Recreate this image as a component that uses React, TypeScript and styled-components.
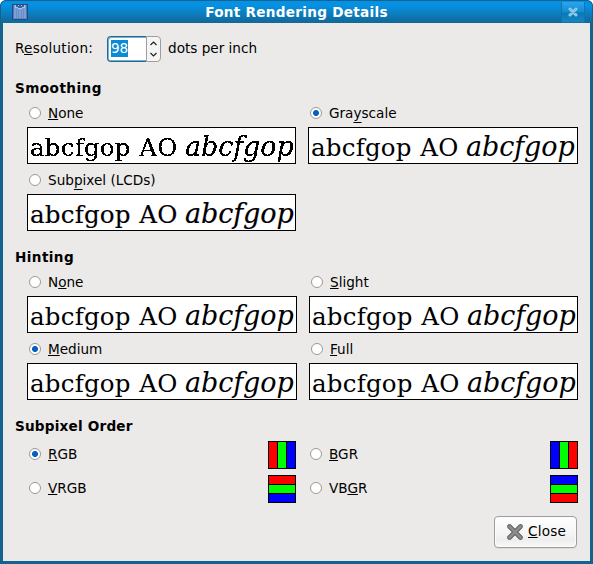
import React, { useState } from "react";
import styled, { createGlobalStyle, css } from "styled-components";

const GlobalStyle = createGlobalStyle`
  * { box-sizing: border-box; }
  html, body { margin: 0; padding: 0; background: #fff; }
  body { overflow: hidden; font: 13.6px/16px "DejaVu Sans", sans-serif; color: #000; }
`;

const Window = styled.div`
  width: 593px;
  height: 564px;
  display: flex;
  flex-direction: column;
  padding: 0 3px 3px;
  background: #12638d;
  border-radius: 6px 6px 0 0;
  overflow: hidden;
`;

const TitleBar = styled.header`
  flex: none;
  display: flex;
  align-items: center;
  height: 23px;
  margin: 0 -3px;
  padding: 0 7px 0 11px;
  border-top: 1px solid #17608a;
  border-left: 1px solid #12638d;
  border-right: 1px solid #12638d;
  border-radius: 6px 6px 0 0;
  background: linear-gradient(#0492e6, #0591e3 20%, #136795);
`;

const Title = styled.h1`
  flex: 1;
  margin: 0;
  padding-left: 4px;
  text-align: center;
  font-size: 13.6px;
  line-height: 22px;
  letter-spacing: 0.28px;
  color: #fff;
`;

const TitleClose = styled.button`
  display: flex;
  justify-content: center;
  width: 24px;
  height: 21px;
  padding: 5px 0 0;
  border: solid #0f75ae;
  border-width: 0 1px 1px;
  background: linear-gradient(#29a5ef, #148ad0 50%, #0878b7 55%, #1b84bd);
`;

const Content = styled.main`
  flex: 1;
  display: flex;
  flex-direction: column;
  padding: 12px 12px 0;
  background: #ebeae8;
`;

const ResolutionRow = styled.div`
  display: flex;
  align-items: center;
  height: 27px;
`;

const ResolutionLabel = styled.label`
  width: 92px;
  padding-bottom: 2px;
  letter-spacing: 0.22px;
`;

const Unit = styled.span`
  padding-bottom: 2px;
`;

const Spinner = styled.div`
  align-self: flex-end;
  display: flex;
  width: 54px;
  height: 26px;
  margin: 0 7px 0 0;
`;

const Entry = styled.div`
  width: 39px;
  padding: 3px 0 0 3px;
  border: 1px solid #1c6c98;
  border-right: 0;
  border-radius: 4px 0 0 4px;
  box-shadow: inset 1px 1px 0 #79adc9, inset 0 -1px 0 #79adc9;
  background: #fff;
`;

const Selection = styled.span`
  display: block;
  width: 17px;
  height: 17px;
  line-height: 16px;
  letter-spacing: -0.1px;
  background: #0b8ad7;
  color: #fff;
`;

const Arrows = styled.div`
  width: 15px;
  border: 1px solid #a29d9d;
  border-radius: 0 4px 4px 0;
  background: #f6f5f5;
  display: flex;
`;

const Group = styled.section`
  margin-top: 18px;
`;

const Heading = styled.h2<{ $tracking: number }>`
  margin: 0;
  height: 16px;
  font-size: 13.6px;
  line-height: 16px;
  letter-spacing: ${(p) => p.$tracking}px;
`;

const Grid = styled.div<{ $left: number; $right: number }>`
  display: grid;
  grid-template-columns: ${(p) => p.$left}px ${(p) => p.$right}px;
  justify-content: space-between;
  row-gap: 8px;
  margin: 9px 0 0 12px;
`;

const SwatchGrid = styled(Grid)`
  row-gap: 6px;
  margin-top: 7px;
`;

const Choice = styled.div``;

const SwatchChoice = styled.div`
  display: flex;
  justify-content: space-between;
  align-items: center;
  height: 28px;
`;

const Option = styled.label`
  display: flex;
  align-items: center;
  height: 16px;
  margin-bottom: 6px;
  padding-left: 2px;
  white-space: nowrap;

  ${SwatchChoice} & {
    margin: 0 0 2px;
  }
`;

const Radio = styled.input`
  appearance: none;
  flex: none;
  width: 12px;
  height: 12px;
  margin: 0 7px 0 0;
  border: 1px solid #9d9898;
  border-radius: 50%;
  background: #fff;
  outline: none;
  &:checked {
    background: radial-gradient(circle, #0560c4 2.6px, #fff 3.4px);
  }
`;

const Mnemonic = styled.span<{ $offset: number }>`
  text-decoration: underline;
  text-decoration-thickness: 1px;
  text-decoration-skip-ink: none;
  text-underline-offset: ${(p) => p.$offset}px;
`;

type Rendering = "mono" | "gray" | "lcd";

const Sample = styled.div<{ $mode: Rendering }>`
  height: 37px;
  padding-left: 2px;
  border: 1px solid #000;
  background: #fff;
  font: 24.5px/37px "DejaVu Serif", serif;
  white-space: pre;
  overflow: hidden;
  ${(p) =>
    p.$mode === "lcd" &&
    css`
      text-shadow: -0.4px 0 rgba(255, 130, 0, 0.25), 0.4px 0 rgba(0, 70, 255, 0.3);
    `}
`;

const SampleText = styled.div<{ $mode: Rendering }>`
  display: flex;
  align-items: baseline;
  height: 35px;
  filter: ${(p) => (p.$mode === "mono" ? "url(#mono)" : "none")};
`;

const Roman = styled.span`
  width: 155px;
  letter-spacing: 0.22px;
  word-spacing: 0.6px;
`;

const Italic = styled.em`
  font-size: 27px;
  letter-spacing: -0.1px;
`;

const Stripes = styled.div<{ $vertical: boolean }>`
  display: flex;
  flex-direction: ${(p) => (p.$vertical ? "column" : "row")};
  gap: 1px;
  width: 28px;
  height: 28px;
  padding: 1px;
  background: #000;
`;

const Stripe = styled.span<{ $color: string }>`
  flex: 1;
  background: ${(p) => p.$color};
`;

const Footer = styled.footer`
  display: flex;
  justify-content: flex-end;
  margin-top: 13px;
`;

const CloseButton = styled.button`
  display: flex;
  align-items: center;
  width: 83px;
  height: 32px;
  margin-right: 1px;
  padding: 0 0 0 11px;
  border: 1px solid #a29d9d;
  border-radius: 4px;
  background: linear-gradient(#fff, #f6f5f5 55%, #efeded 75%, #f8f8f8);
  box-shadow: inset 0 0 0 1px #fbfbfb, 0 1px 0 #dcdada;
  font: inherit;
  color: #000;
`;

const CloseLabel = styled.span`
  margin: -2px 0 0 4px;
  letter-spacing: 0.2px;
`;

function Accel({ text, at }: { text: string; at: number }) {
  const letter = text[at];
  return (
    <span>
      {text.slice(0, at)}
      <Mnemonic $offset={"py".includes(letter) ? 4 : 1}>{letter}</Mnemonic>
      {text.slice(at + 1)}
    </span>
  );
}

interface OptionProps {
  group: string;
  text: string;
  at: number;
  value: string;
  onPick: (v: string) => void;
}

function RadioOption({ group, text, at, value, onPick }: OptionProps) {
  return (
    <Option>
      <Radio type="radio" name={group} checked={value === text} onChange={() => onPick(text)} />
      <Accel text={text} at={at} />
    </Option>
  );
}

function SampleChoice({ mode = "gray", ...rest }: OptionProps & { mode?: Rendering }) {
  return (
    <Choice>
      <RadioOption {...rest} />
      <Sample $mode={mode}>
        <SampleText $mode={mode}>
          <Roman>abcfgop AO </Roman>
          <Italic>abcfgop</Italic>
        </SampleText>
      </Sample>
    </Choice>
  );
}

const RED = "#f00";
const GREEN = "#0f0";
const BLUE = "#00f";

function OrderChoice({ colors, ...rest }: OptionProps & { colors: string[] }) {
  return (
    <SwatchChoice>
      <RadioOption {...rest} />
      <Stripes $vertical={rest.text.startsWith("V")}>
        {colors.map((c) => (
          <Stripe key={c} $color={c} />
        ))}
      </Stripes>
    </SwatchChoice>
  );
}

export default function App() {
  const [smoothing, setSmoothing] = useState("Grayscale");
  const [hinting, setHinting] = useState("Medium");
  const [order, setOrder] = useState("RGB");
  const s = { group: "smoothing", value: smoothing, onPick: setSmoothing };
  const h = { group: "hinting", value: hinting, onPick: setHinting };
  const o = { group: "order", value: order, onPick: setOrder };

  return (
    <>
      <GlobalStyle />
      <Window>
        <TitleBar>
          <svg width="16" height="16" viewBox="0 0 16 16" shapeRendering="crispEdges">
            <rect x=".5" y=".5" width="15" height="15" fill="#7ba0d4" stroke="#204a87" />
            <path d="M1.5 1v14M14.5 1v14" stroke="#4a78b8" />
            <path d="M4 1h8v2h-1v1H5V3H4z" fill="#3763a3" />
            <path d="M3.5 1v3M12.5 1v3M4 3.5h2M10 3.5h2M6 4.5h4M6.5 1v1M9.5 1v1" stroke="#a9c4e8" />
            <path d="M4.5 5v10M6.5 6v9M9.5 6v9M11.5 5v10" stroke="#668fc9" />
            <path d="M1 14.5h14" stroke="#5c87c3" />
          </svg>
          <Title>Font Rendering Details</Title>
          <TitleClose aria-label="Close window">
            <svg width="10" height="10" viewBox="0 0 10 10">
              <path d="M2 2l6 6M8 2L2 8" stroke="#91ceed" strokeWidth="3" strokeLinecap="round" />
              <path d="M2 2l6 6M8 2L2 8" stroke="#5eb3e2" strokeWidth="1" strokeDasharray="1 1" />
            </svg>
          </TitleClose>
        </TitleBar>
        <Content>
          <ResolutionRow>
            <ResolutionLabel>
              <Accel text="Resolution:" at={1} />
            </ResolutionLabel>
            <Spinner>
              <Entry>
                <Selection>98</Selection>
              </Entry>
              <Arrows>
                <svg width="13" height="24" viewBox="0 0 13 24" fill="none" stroke="#222" strokeWidth="1.2">
                  <path d="M3.5 8l3-3 3 3M3.5 16l3 3 3-3" />
                </svg>
              </Arrows>
            </Spinner>
            <Unit>dots per inch</Unit>
          </ResolutionRow>

          <Group>
            <Heading $tracking={0.44}>Smoothing</Heading>
            <Grid $left={269} $right={270}>
              <SampleChoice {...s} text="None" at={0} mode="mono" />
              <SampleChoice {...s} text="Grayscale" at={3} />
              <SampleChoice {...s} text="Subpixel (LCDs)" at={3} mode="lcd" />
            </Grid>
          </Group>

          <Group>
            <Heading $tracking={0.4}>Hinting</Heading>
            <Grid $left={270} $right={269}>
              <SampleChoice {...h} text="None" at={1} />
              <SampleChoice {...h} text="Slight" at={0} />
              <SampleChoice {...h} text="Medium" at={0} />
              <SampleChoice {...h} text="Full" at={0} />
            </Grid>
          </Group>

          <Group>
            <Heading $tracking={0.2}>Subpixel Order</Heading>
            <SwatchGrid $left={269} $right={270}>
              <OrderChoice {...o} text="RGB" at={0} colors={[RED, GREEN, BLUE]} />
              <OrderChoice {...o} text="BGR" at={0} colors={[BLUE, GREEN, RED]} />
              <OrderChoice {...o} text="VRGB" at={0} colors={[RED, GREEN, BLUE]} />
              <OrderChoice {...o} text="VBGR" at={2} colors={[BLUE, GREEN, RED]} />
            </SwatchGrid>
          </Group>

          <Footer>
            <CloseButton>
              <svg width="18" height="18" viewBox="0 0 18 18" strokeLinecap="round">
                <path d="M3.5 3.5l11 11M14.5 3.5l-11 11" stroke="#5c5e5b" strokeWidth="4.6" />
                <path d="M3.5 3.5l11 11M14.5 3.5l-11 11" stroke="#8b8d8a" strokeWidth="2.8" />
              </svg>
              <CloseLabel>
                <Accel text="Close" at={0} />
              </CloseLabel>
            </CloseButton>
          </Footer>
        </Content>
      </Window>
      <svg width="0" height="0" aria-hidden="true">
        <filter id="mono" x="0" y="0" width="100%" height="100%">
          <feComponentTransfer>
            <feFuncA type="discrete" tableValues="0 0 1 1 1" />
          </feComponentTransfer>
        </filter>
      </svg>
    </>
  );
}
